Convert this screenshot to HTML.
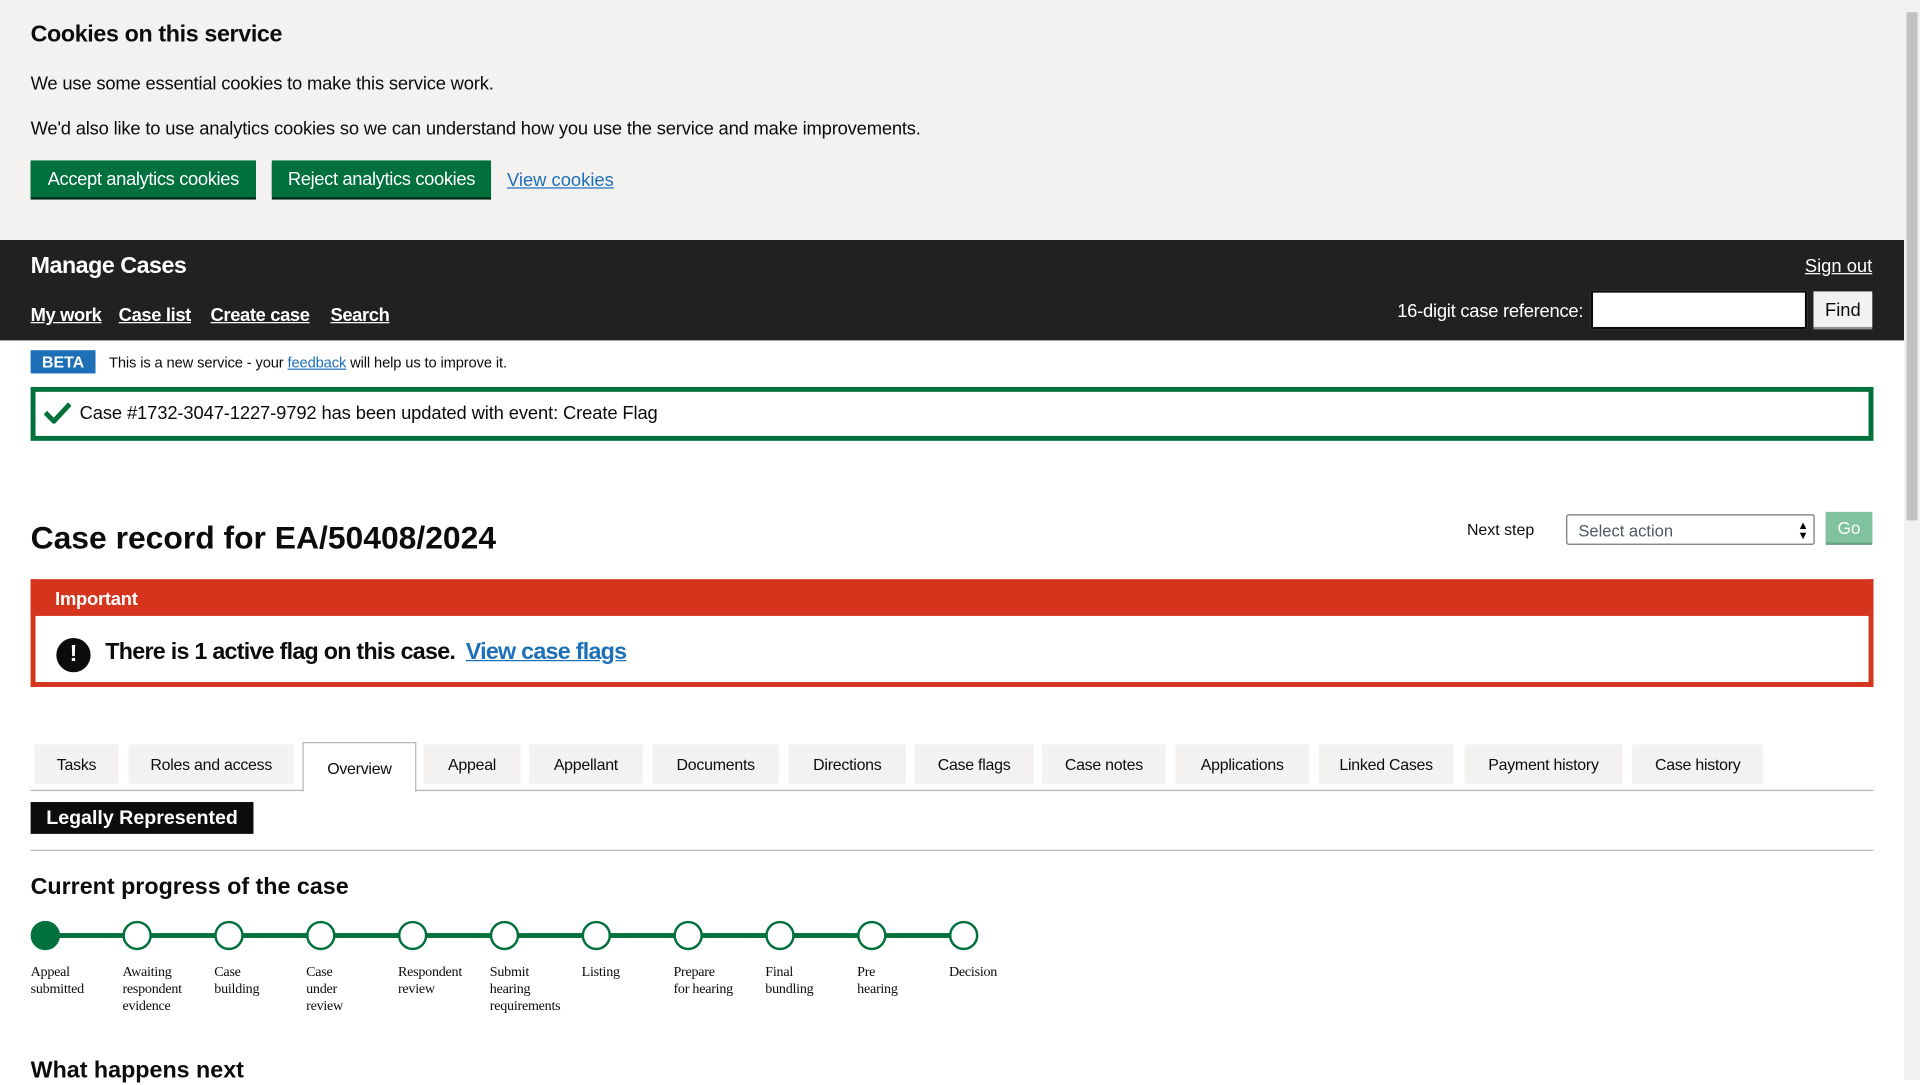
<!DOCTYPE html>
<html><head><meta charset="utf-8"><style>
html,body{margin:0;padding:0;width:1920px;height:1080px;overflow:hidden;background:#fff}
#w{position:absolute;left:0;top:0;width:1568px;height:882px;transform:scale(1.22449);transform-origin:0 0;font-family:"Liberation Sans",Arial,sans-serif;color:#0b0c0c}
.a{position:absolute;white-space:nowrap}
.btn{position:absolute;background:#00703c;color:#fff;font-size:15px;letter-spacing:-0.3px;height:30px;line-height:32px;box-shadow:0 2px 0 #002d18;text-align:center}
a{color:#1d70b8;text-decoration:underline}
.tab{position:absolute;top:608px;height:32px;line-height:33px;background:#f3f2f1;font-size:13px;letter-spacing:-0.2px;text-align:center}
.lbl{position:absolute;top:787px;font-family:"Liberation Serif",serif;font-size:11.5px;line-height:14px;letter-spacing:-0.2px}
.c{position:absolute;top:752px;width:20px;height:20px;border:2px solid #00703c;border-radius:50%;background:#fff}
</style></head><body><div id="w">
<div class="a" style="left:0;top:0;width:1555px;height:196px;background:#f3f2f1"></div>
<div class="a" style="left:25px;top:18px;font-size:19px;font-weight:bold;letter-spacing:-0.3px">Cookies on this service</div>
<div class="a" style="left:25px;top:60px;font-size:15px;letter-spacing:-0.15px">We use some essential cookies to make this service work.</div>
<div class="a" style="left:25px;top:97px;font-size:15px;letter-spacing:-0.15px">We'd also like to use analytics cookies so we can understand how you use the service and make improvements.</div>
<div class="btn" style="left:25px;top:131px;width:184px">Accept analytics cookies</div>
<div class="btn" style="left:222px;top:131px;width:179px">Reject analytics cookies</div>
<a class="a" style="left:414px;top:139px;font-size:15px">View cookies</a>
<div class="a" style="left:0;top:196px;width:1555px;height:82px;background:#212121"></div>
<div class="a" style="left:25px;top:207px;font-size:19px;font-weight:bold;color:#fff;letter-spacing:-0.4px">Manage Cases</div>
<div class="a" style="left:25px;top:249px;font-size:15px;font-weight:bold;color:#fff;text-decoration:underline;letter-spacing:-0.3px"><span>My work</span><span style="margin-left:14px">Case list</span><span style="margin-left:16px">Create case</span><span style="margin-left:17px">Search</span></div>
<div class="a" style="right:39px;top:209px;font-size:15px;color:#fff;text-decoration:underline">Sign out</div>
<div class="a" style="right:275px;top:246px;font-size:15px;color:#fff;letter-spacing:-0.2px">16-digit case reference:</div>
<div class="a" style="left:1299px;top:237px;width:173px;height:28px;background:#fff;border:2px solid #0b0c0c"></div>
<div class="a" style="left:1481px;top:238px;width:48px;height:29px;background:#f3f2f1;box-shadow:0 2px 0 #929191;font-size:15px;text-align:center;line-height:32px">Find</div>
<div class="a" style="left:25px;top:286px;width:53px;height:19px;background:#1d70b8;color:#fff;font-weight:bold;font-size:13px;text-align:center;line-height:20px">BETA</div>
<div class="a" style="left:89px;top:289px;font-size:12px;letter-spacing:-0.1px">This is a new service - your <a>feedback</a> will help us to improve it.</div>
<div class="a" style="left:25px;top:316px;width:1497px;height:36px;border:4px solid #00703c"></div>
<svg class="a" style="left:36px;top:328px" width="22" height="18" viewBox="0 0 22 18"><path d="M1 9 L8 16 L21 2" fill="none" stroke="#00703c" stroke-width="4"/></svg>
<div class="a" style="left:65px;top:329px;font-size:15px;letter-spacing:-0.1px">Case #1732-3047-1227-9792 has been updated with event: Create Flag</div>
<div class="a" style="left:25px;top:424px;font-size:26px;font-weight:bold">Case record for EA/50408/2024</div>
<div class="a" style="left:1198px;top:425px;font-size:13px">Next step</div>
<div class="a" style="left:1279px;top:420px;width:201px;height:23px;border:1px solid #767676;border-radius:2px;font-size:13.5px;color:#505a5f;line-height:25px;text-indent:9px">Select action<span style="position:absolute;right:4px;top:0;font-size:9px;line-height:8px;color:#000;padding-top:4px;text-indent:0">▲<br>▼</span></div>
<div class="a" style="left:1491px;top:418px;width:38px;height:25px;background:#80c29e;box-shadow:0 2px 0 #6aa384;color:#fff;font-size:14px;text-align:center;line-height:26px">Go</div>
<div class="a" style="left:25px;top:473px;width:1497px;height:84px;border:4px solid #d4351c;border-top:0"></div>
<div class="a" style="left:25px;top:473px;width:1505px;height:30px;background:#d4351c"></div>
<div class="a" style="left:45px;top:481px;font-size:15px;font-weight:bold;color:#fff;letter-spacing:-0.2px">Important</div>
<div class="a" style="left:46px;top:521px;width:28px;height:28px;border-radius:50%;background:#0b0c0c;color:#fff;font-weight:bold;font-size:19px;text-align:center;line-height:28px">!</div>
<div class="a" style="left:86px;top:522px;font-size:19px;font-weight:bold;letter-spacing:-0.6px">There is 1 active flag on this case. <a style="margin-left:4px">View case flags</a></div>
<div class="a" style="left:25px;top:645px;width:1505px;height:1px;background:#b1b4b6"></div>
<div class="tab" style="left:28px;width:69px">Tasks</div>
<div class="tab" style="left:105px;width:135px">Roles and access</div>
<div class="tab" style="left:247px;top:606px;width:91px;height:39px;line-height:42px;background:#fff;border:1px solid #b1b4b6;border-bottom:1px solid #fff">Overview</div>
<div class="tab" style="left:346px;width:79px">Appeal</div>
<div class="tab" style="left:432px;width:93px">Appellant</div>
<div class="tab" style="left:533px;width:103px">Documents</div>
<div class="tab" style="left:644px;width:96px">Directions</div>
<div class="tab" style="left:747px;width:97px">Case flags</div>
<div class="tab" style="left:851px;width:101px">Case notes</div>
<div class="tab" style="left:960px;width:109px">Applications</div>
<div class="tab" style="left:1077px;width:110px">Linked Cases</div>
<div class="tab" style="left:1196px;width:129px">Payment history</div>
<div class="tab" style="left:1333px;width:107px">Case history</div>
<div class="a" style="left:25px;top:655px;width:182px;height:26px;background:#0b0c0c;color:#fff;font-weight:bold;font-size:16px;text-align:center;line-height:27px">Legally Represented</div>
<div class="a" style="left:25px;top:694px;width:1505px;height:1px;background:#b1b4b6"></div>
<div class="a" style="left:25px;top:714px;font-size:19px;font-weight:bold">Current progress of the case</div>
<div class="a" style="left:37px;top:762px;width:750px;height:4px;background:#00703c"></div>
<div class="c" style="left:25px;background:#00703c"></div>
<div class="c" style="left:100px"></div><div class="c" style="left:175px"></div><div class="c" style="left:250px"></div><div class="c" style="left:325px"></div><div class="c" style="left:400px"></div><div class="c" style="left:475px"></div><div class="c" style="left:550px"></div><div class="c" style="left:625px"></div><div class="c" style="left:700px"></div><div class="c" style="left:775px"></div>
<div class="lbl" style="left:25px">Appeal<br>submitted</div>
<div class="lbl" style="left:100px">Awaiting<br>respondent<br>evidence</div>
<div class="lbl" style="left:175px">Case<br>building</div>
<div class="lbl" style="left:250px">Case<br>under<br>review</div>
<div class="lbl" style="left:325px">Respondent<br>review</div>
<div class="lbl" style="left:400px">Submit<br>hearing<br>requirements</div>
<div class="lbl" style="left:475px">Listing</div>
<div class="lbl" style="left:550px">Prepare<br>for hearing</div>
<div class="lbl" style="left:625px">Final<br>bundling</div>
<div class="lbl" style="left:700px">Pre<br>hearing</div>
<div class="lbl" style="left:775px">Decision</div>
<div class="a" style="left:25px;top:864px;font-size:19px;font-weight:bold">What happens next</div>
<div class="a" style="left:1555px;top:0;width:13px;height:882px;background:#f1f1f1"></div>
<div class="a" style="left:1557px;top:10px;width:9px;height:415px;background:#c1c1c1"></div>
</div></body></html>
